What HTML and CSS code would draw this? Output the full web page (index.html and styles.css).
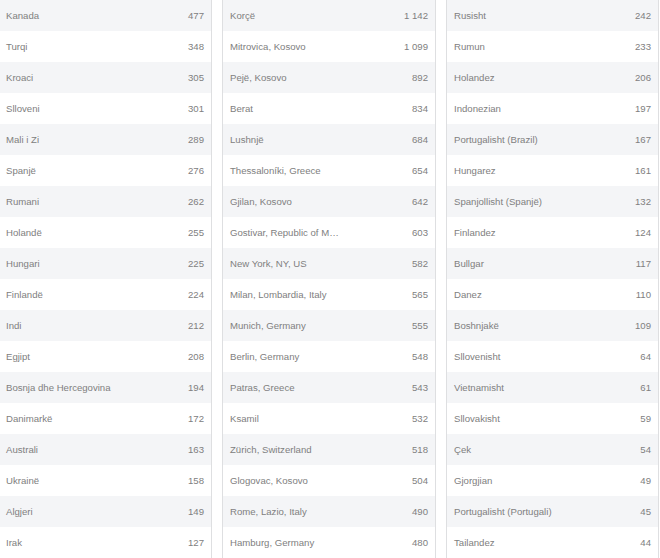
FILE: index.html
```html
<!DOCTYPE html>
<html lang="sq">
<head>
<meta charset="utf-8">
<title>Statistika</title>
<link rel="stylesheet" href="styles.css">
</head>
<body>
<div class="grid">
  <div class="panel">
    <div class="row"><span class="label">Kanada</span><span class="num">477</span></div>
    <div class="row"><span class="label">Turqi</span><span class="num">348</span></div>
    <div class="row"><span class="label">Kroaci</span><span class="num">305</span></div>
    <div class="row"><span class="label">Slloveni</span><span class="num">301</span></div>
    <div class="row"><span class="label">Mali i Zi</span><span class="num">289</span></div>
    <div class="row"><span class="label">Spanjë</span><span class="num">276</span></div>
    <div class="row"><span class="label">Rumani</span><span class="num">262</span></div>
    <div class="row"><span class="label">Holandë</span><span class="num">255</span></div>
    <div class="row"><span class="label">Hungari</span><span class="num">225</span></div>
    <div class="row"><span class="label">Finlandë</span><span class="num">224</span></div>
    <div class="row"><span class="label">Indi</span><span class="num">212</span></div>
    <div class="row"><span class="label">Egjipt</span><span class="num">208</span></div>
    <div class="row"><span class="label">Bosnja dhe Hercegovina</span><span class="num">194</span></div>
    <div class="row"><span class="label">Danimarkë</span><span class="num">172</span></div>
    <div class="row"><span class="label">Australi</span><span class="num">163</span></div>
    <div class="row"><span class="label">Ukrainë</span><span class="num">158</span></div>
    <div class="row"><span class="label">Algjeri</span><span class="num">149</span></div>
    <div class="row"><span class="label">Irak</span><span class="num">127</span></div>
  </div>
  <div class="panel">
    <div class="row"><span class="label">Korçë</span><span class="num">1 142</span></div>
    <div class="row"><span class="label">Mitrovica, Kosovo</span><span class="num">1 099</span></div>
    <div class="row"><span class="label">Pejë, Kosovo</span><span class="num">892</span></div>
    <div class="row"><span class="label">Berat</span><span class="num">834</span></div>
    <div class="row"><span class="label">Lushnjë</span><span class="num">684</span></div>
    <div class="row"><span class="label">Thessaloníki, Greece</span><span class="num">654</span></div>
    <div class="row"><span class="label">Gjilan, Kosovo</span><span class="num">642</span></div>
    <div class="row"><span class="label">Gostivar, Republic of M…</span><span class="num">603</span></div>
    <div class="row"><span class="label">New York, NY, US</span><span class="num">582</span></div>
    <div class="row"><span class="label">Milan, Lombardia, Italy</span><span class="num">565</span></div>
    <div class="row"><span class="label">Munich, Germany</span><span class="num">555</span></div>
    <div class="row"><span class="label">Berlin, Germany</span><span class="num">548</span></div>
    <div class="row"><span class="label">Patras, Greece</span><span class="num">543</span></div>
    <div class="row"><span class="label">Ksamil</span><span class="num">532</span></div>
    <div class="row"><span class="label">Zürich, Switzerland</span><span class="num">518</span></div>
    <div class="row"><span class="label">Glogovac, Kosovo</span><span class="num">504</span></div>
    <div class="row"><span class="label">Rome, Lazio, Italy</span><span class="num">490</span></div>
    <div class="row"><span class="label">Hamburg, Germany</span><span class="num">480</span></div>
  </div>
  <div class="panel">
    <div class="row"><span class="label">Rusisht</span><span class="num">242</span></div>
    <div class="row"><span class="label">Rumun</span><span class="num">233</span></div>
    <div class="row"><span class="label">Holandez</span><span class="num">206</span></div>
    <div class="row"><span class="label">Indonezian</span><span class="num">197</span></div>
    <div class="row"><span class="label">Portugalisht (Brazil)</span><span class="num">167</span></div>
    <div class="row"><span class="label">Hungarez</span><span class="num">161</span></div>
    <div class="row"><span class="label">Spanjollisht (Spanjë)</span><span class="num">132</span></div>
    <div class="row"><span class="label">Finlandez</span><span class="num">124</span></div>
    <div class="row"><span class="label">Bullgar</span><span class="num">117</span></div>
    <div class="row"><span class="label">Danez</span><span class="num">110</span></div>
    <div class="row"><span class="label">Boshnjakë</span><span class="num">109</span></div>
    <div class="row"><span class="label">Sllovenisht</span><span class="num">64</span></div>
    <div class="row"><span class="label">Vietnamisht</span><span class="num">61</span></div>
    <div class="row"><span class="label">Sllovakisht</span><span class="num">59</span></div>
    <div class="row"><span class="label">Çek</span><span class="num">54</span></div>
    <div class="row"><span class="label">Gjorgjian</span><span class="num">49</span></div>
    <div class="row"><span class="label">Portugalisht (Portugali)</span><span class="num">45</span></div>
    <div class="row"><span class="label">Tailandez</span><span class="num">44</span></div>
  </div>
</div>
</body>
</html>
```
FILE: styles.css
```css
html, body {
  margin: 0;
  padding: 0;
  background: #ffffff;
  overflow: hidden;
}
body {
  font-family: "Liberation Sans", Arial, sans-serif;
  font-size: 9.6px;
  color: #808080;
}
.grid {
  display: grid;
  grid-template-columns: 214px 214px 213px;
  column-gap: 10px;
  margin-left: -2px;
}
.panel {
  border-left: 1px solid #dedfe1;
  border-right: 1px solid #dedfe1;
  box-shadow: inset 0 1px 0 #e9eaec;
}
.row {
  height: 31px;
  display: flex;
  align-items: center;
  justify-content: space-between;
  padding: 0 7px;
}
.row:nth-child(odd) {
  background: #f4f5f7;
}
.label {
  white-space: nowrap;
}
.num {
  white-space: nowrap;
}
```
